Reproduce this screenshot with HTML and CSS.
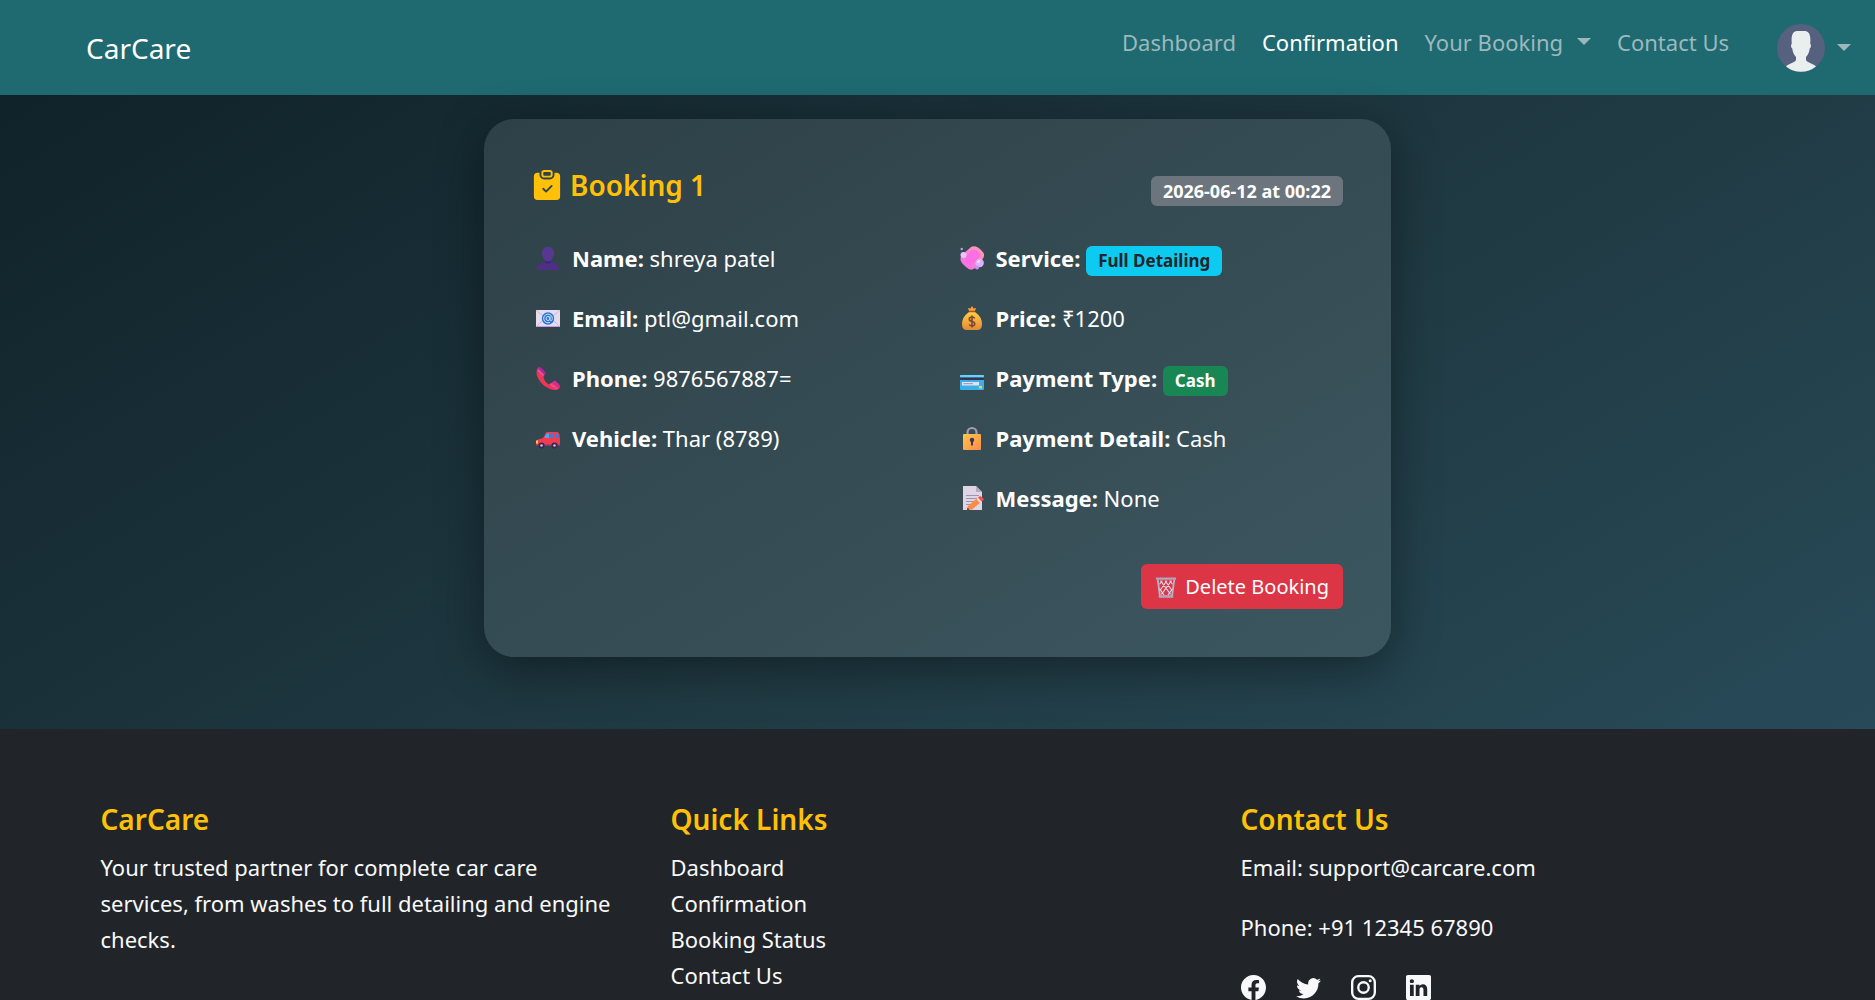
FILE: index.html
```html
<!DOCTYPE html>
<html lang="en">
<head>
	<title>CarCare :: Confirmation</title>
	<meta charset="utf-8">
	<meta name="viewport" content="width=device-width, initial-scale=1.0">
	<link rel="stylesheet" href="styles.css">
</head>

<body>
<nav class="navbar">
	<a href="#" class="brand">CarCare</a>
	<div class="nav_right">
		<ul class="nav_menu">
			<li><a href="#">Dashboard</a></li>
			<li><a href="#" class="active">Confirmation</a></li>
			<li><a href="#" class="dropdown">Your Booking</a></li>
			<li><a href="#">Contact Us</a></li>
		</ul>
		<a href="#" class="profile dropdown" aria-label="Profile">
			<svg class="avatar" viewBox="0 0 48 48">
				<circle cx="24" cy="24" r="24" fill="#56607f"/>
				<path d="M9 42.500C11 40 18 38.500 19 36V33C16.500 30.500 15.500 27 15.300 24.500C13.800 24 13.700 20.500 14.800 19.800C14 12 15.500 7 20 7H28C32.500 7 34 12 33.200 19.800C34.300 20.500 34.200 24 32.700 24.500C32.500 27 31.500 30.500 29 33V36C30 38.500 37 40 39 42.500A24 24 0 0 1 9 42.500Z" fill="#e9eeee"/>
			</svg>
		</a>
	</div>
</nav>

<main class="content">
	<section class="booking">
		<div class="booking_head">
			<h2>
				<svg class="title_icon" viewBox="0 0 16 16" fill="currentColor">
					<path d="M6.500 0A1.500 1.500 0 0 0 5 1.500v1A1.500 1.500 0 0 0 6.500 4h3A1.500 1.500 0 0 0 11 2.500v-1A1.500 1.500 0 0 0 9.500 0zm3 1a.5.5 0 0 1 .5.5v1a.5.5 0 0 1-.5.5h-3a.5.5 0 0 1-.5-.5v-1a.5.5 0 0 1 .5-.5z"/>
					<path d="M4 1.500H3a2 2 0 0 0-2 2V14a2 2 0 0 0 2 2h10a2 2 0 0 0 2-2V3.500a2 2 0 0 0-2-2h-1v1A2.500 2.500 0 0 1 9.500 5h-3A2.500 2.500 0 0 1 4 2.500zm6.854 7.354-3 3a.5.5 0 0 1-.708 0l-1.500-1.500a.5.5 0 0 1 .708-.708L7.500 10.793l2.646-2.647a.5.5 0 0 1 .708.708"/>
				</svg>
				Booking 1
			</h2>
			<span class="badge badge_date">2026-06-12 at 00:22</span>
		</div>
		<div class="booking_info">
			<div class="col">
				<p>
					<svg viewBox="0 0 24 24">
						<path d="M1 24C1 18.500 5 16.500 9 16V14H15V16C19 16.500 23 18.500 23 24Z" fill="#4f2f86"/>
						<path d="M6.500 6C6.500 2.500 8.500 1 12 1S17.500 2.500 17.500 6C19 7 18.500 9.500 17.300 10C16.500 13.500 14.500 15.500 12 15.500S7.500 13.500 6.700 10C5.500 9.500 5 7 6.500 6Z" fill="#573891"/>
						<path d="M9 14.500Q12 17 15 14.500V16.500Q12 18.500 9 16.500Z" fill="#3e2471"/>
					</svg>
					<span><b>Name:</b> shreya patel</span>
				</p>
				<p>
					<svg viewBox="0 0 24 24">
						<rect y="4" width="24" height="17" fill="#e6dcef"/>
						<path d="M0 4L12 14L24 4M0 21L9 12M24 21L15 12" fill="none" stroke="#c5b9d6"/>
						<path d="M0 20H24V21H0Z" fill="#c99be0"/>
						<circle cx="12" cy="12.500" r="6.200" fill="#2f78d2"/>
						<path d="M14 10V13.500C14 15.500 16.300 15 16.300 12.500A4.300 4.300 0 1 0 14 16.300M14 12.500A2 2 0 1 1 10 12.500A2 2 0 1 1 14 12.500" fill="none" stroke="#cfe0fa"/>
					</svg>
					<span><b>Email:</b> ptl@gmail.com</span>
				</p>
				<p>
					<svg viewBox="0 0 24 24">
						<path d="M3 1C0 3 0 8 2 12C5 18 11 23 18 24C21 24 23 23.500 23.500 22L17 16L13 18.500C9.500 16.500 8 14 7.500 11L9 8Z" fill="#ef3658"/>
						<path d="M2.500 1.500Q4 .5 5 1.500L10 6.500L8 9.500L2.500 3.500Z" fill="#a42aa0"/>
						<path d="M16 16.500L18.500 14.500Q20 14.500 23.500 19Q24.500 20.500 23.500 22Z" fill="#d32b9d"/>
						<path d="M2 4L7.500 9.500M14 18L21 22.500" stroke="#f04a94" stroke-width="2"/>
					</svg>
					<span><b>Phone:</b> 9876567887=</span>
				</p>
				<p>
					<svg viewBox="0 0 24 24">
						<path d="M7 12L10 6.500Q10.500 6 11.500 6H21Q23 6 23.300 8L24 13V19Q24 20 23 20H1Q0 20 0 19V15.500Q0 14 2 13.500Z" fill="#f13c52"/>
						<path d="M10.500 7.500H13V12H8.500Z" fill="#47a8f5"/>
						<path d="M14.500 7.500H18V12H14.500ZM19.500 7.500H22L22.700 12H19.500Z" fill="#2e83e0"/>
						<rect y="14.500" width="2" height="3" fill="#ffc839"/>
						<path d="M0 18.500H24V20H0Z" fill="#7e3b73"/>
						<circle cx="5.500" cy="19.500" r="3" fill="#38274f"/>
						<circle cx="18.500" cy="19.500" r="3" fill="#38274f"/>
						<circle cx="5.500" cy="19.500" r="1.300" fill="#c9bdd6"/>
						<circle cx="18.500" cy="19.500" r="1.300" fill="#c9bdd6"/>
					</svg>
					<span><b>Vehicle:</b> Thar (8789)</span>
				</p>
			</div>
			<div class="col">
				<p>
					<svg viewBox="0 0 24 24">
						<defs>
							<linearGradient id="soap" x1="1" y1="0" x2="0" y2="1">
								<stop offset="0" stop-color="#ff9fa9"/>
								<stop offset="1" stop-color="#f46af0"/>
							</linearGradient>
						</defs>
						<path d="M11 1Q14-.5 18 1.500Q23 5 24 8Q24.500 11 22 14L15 22Q11 26 6 21Q1 17 .5 14Q0 11 3 8Z" fill="url(#soap)"/>
						<path d="M12 4Q16 3 20 7.500Q21 10 18 13L12 19Q8 20 5 15Q4 12 7 9Z" fill="#fa70e4"/>
						<circle cx="3.500" cy="9" r="3" fill="#edc1ff"/>
						<circle cx="19.700" cy="17" r="4.200" fill="#dcb2ff"/>
						<circle cx="17" cy="21.500" r="2" fill="#c695f4"/>
						<circle cx="1.700" cy="3" r="1.200" fill="#bba9d0"/>
						<circle cx="18.500" cy="15.500" r="1.500" fill="#f1dcff"/>
					</svg>
					<span><b>Service:</b> <span class="badge badge_info">Full Detailing</span></span>
				</p>
				<p>
					<svg viewBox="0 0 24 24">
						<defs>
							<linearGradient id="bag" x1="0" y1="0" x2="0" y2="1">
								<stop offset="0" stop-color="#ffcd43"/>
								<stop offset="1" stop-color="#e68a34"/>
							</linearGradient>
						</defs>
						<path d="M9 5L8 2L10.500 2.500L12 0L13.500 2.500L16 2L15 5Z" fill="#ff9c35"/>
						<path d="M9 6H15Q22 11 22 18Q22 24 17 24H7Q2 24 2 18Q2 11 9 6Z" fill="url(#bag)"/>
						<path d="M9 5.500H15" stroke="#a9562d" stroke-width="1.500"/>
						<path d="M14.700 12.500Q14 11 12 11Q9.300 11 9.300 13Q9.300 15 12 15.500Q14.700 16 14.700 18Q14.700 20 12 20Q10 20 9.300 18.500M12 9.500V21.500" fill="none" stroke="#7a4636" stroke-width="1.600"/>
					</svg>
					<span><b>Price:</b> ₹1200</span>
				</p>
				<p>
					<svg viewBox="0 0 24 24">
						<rect y="9" width="24" height="15" rx="1" fill="#38b1ea"/>
						<rect y="9" width="24" height="2" rx="1" fill="#65d3f5"/>
						<rect y="11.500" width="24" height="2.500" fill="#3c3150"/>
						<rect x="2" y="16" width="17" height="3.500" fill="#e5e0ef"/>
						<path d="M3.500 17.700H13" stroke="#9b91ad"/>
						<rect x="19" y="20" width="3" height="2.500" fill="#ffcd38"/>
					</svg>
					<span><b>Payment Type:</b> <span class="badge badge_success">Cash</span></span>
				</p>
				<p>
					<svg viewBox="0 0 24 24">
						<defs>
							<linearGradient id="lock" x1="0" y1="0" x2="1" y2="1">
								<stop offset="0" stop-color="#ffc845"/>
								<stop offset="1" stop-color="#fb8a4d"/>
							</linearGradient>
						</defs>
						<path d="M7.500 10V6.500A4.500 4.500 0 0 1 16.500 6.500V10" fill="none" stroke="#a69bb0" stroke-width="2.200"/>
						<rect x="3" y="8" width="18" height="16" rx="1" fill="url(#lock)"/>
						<circle cx="12" cy="14" r="2.200" fill="#41305d"/>
						<path d="M12 14V19.500" stroke="#41305d" stroke-width="2"/>
					</svg>
					<span><b>Payment Detail:</b> Cash</span>
				</p>
				<p>
					<svg viewBox="0 0 24 24">
						<path d="M3 0H16L22 6V24H3Z" fill="#ded5e5"/>
						<path d="M16 0V6H22Z" fill="#b5a9c3"/>
						<path d="M6 9.500H19M6 12.500H19M6 15.500H14M6 18.500H11" stroke="#9e94ab"/>
						<path d="M8 20L18 11.500L21.500 15.500L12 23.500L7 24Z" fill="#ff8c43"/>
						<path d="M16.500 13L18 11.700L21.500 15.500L20 17Z" fill="#eee3f3"/>
						<path d="M18 11.500L20 10Q22 10 24 13.500L21.500 15.500Z" fill="#f4524f"/>
						<path d="M7 24L7.600 21.500L9.500 23.700Z" fill="#633052"/>
					</svg>
					<span><b>Message:</b> None</span>
				</p>
			</div>
		</div>
		<div class="booking_foot">
			<button type="button" class="btn_delete">
				<svg viewBox="0 0 24 24">
					<path d="M3 4L5.500 22.500H18.500L21 4" fill="none" stroke="#bdb2c9" stroke-width="2"/>
					<path d="M6 5L17 20M11 5L18 15M16 5L19 9M18 5L7 20M13 5L6 15M8 5L5 9M5 14L10 21M19 14L14 21" stroke="#ded5e5" stroke-width="1.200"/>
					<path d="M1 1.500H23V4H1ZM4 21H20V23.500H4Z" fill="#b1a6bd"/>
				</svg>
				Delete Booking
			</button>
		</div>
	</section>
</main>

<footer class="footer">
	<div class="footer_inner">
		<div>
			<h3>CarCare</h3>
			<p class="about">Your trusted partner for complete car care services, from washes to full detailing and engine checks.</p>
		</div>
		<div>
			<h3>Quick Links</h3>
			<ul>
				<li><a href="#">Dashboard</a></li>
				<li><a href="#">Confirmation</a></li>
				<li><a href="#">Booking Status</a></li>
				<li><a href="#">Contact Us</a></li>
			</ul>
		</div>
		<div>
			<h3>Contact Us</h3>
			<p>Email: support@carcare.com</p>
			<p>Phone: +91 12345 67890</p>
			<div class="social">
				<a href="#" aria-label="Facebook">
					<svg viewBox="0 0 16 16" fill="currentColor"><path d="M16 8.049c0-4.446-3.582-8.050-8-8.050C3.580 0-.002 3.603-.002 8.050c0 4.017 2.926 7.347 6.750 7.951v-5.625h-2.030V8.050H6.750V6.275c0-2.017 1.195-3.131 3.022-3.131.876 0 1.791.157 1.791.157v1.980h-1.009c-.993 0-1.303.621-1.303 1.258v1.510h2.218l-.354 2.326H9.250V16c3.824-.604 6.750-3.934 6.750-7.951"/></svg>
				</a>
				<a href="#" aria-label="Twitter">
					<svg viewBox="0 0 16 16" fill="currentColor"><path d="M5.026 15c6.038 0 9.341-5.003 9.341-9.334q.002-.211-.006-.422A6.700 6.700 0 0 0 16 3.542a6.700 6.700 0 0 1-1.889.518 3.300 3.300 0 0 0 1.447-1.817 6.500 6.500 0 0 1-2.087.793A3.286 3.286 0 0 0 7.875 6.030a9.320 9.320 0 0 1-6.767-3.429 3.290 3.290 0 0 0 1.018 4.382A3.300 3.300 0 0 1 .64 6.575v.045a3.290 3.290 0 0 0 2.632 3.218 3.200 3.200 0 0 1-.865.115 3 3 0 0 1-.614-.057 3.280 3.280 0 0 0 3.067 2.277A6.600 6.600 0 0 1 .78 13.580a6 6 0 0 1-.78-.045A9.340 9.340 0 0 0 5.026 15"/></svg>
				</a>
				<a href="#" aria-label="Instagram">
					<svg viewBox="0 0 16 16" fill="none" stroke="currentColor" stroke-width="1.500"><rect x=".75" y=".75" width="14.500" height="14.500" rx="4"/><circle cx="8" cy="8" r="3.350"/><circle cx="12.270" cy="3.730" r=".96" fill="currentColor" stroke="none"/></svg>
				</a>
				<a href="#" aria-label="LinkedIn">
					<svg viewBox="0 0 16 16" fill="currentColor"><path d="M0 1.146C0 .513.526 0 1.175 0h13.650C15.474 0 16 .513 16 1.146v13.708c0 .633-.526 1.146-1.175 1.146H1.175C.526 16 0 15.487 0 14.854zm4.943 12.248V6.169H2.542v7.225zm-1.200-8.212c.837 0 1.358-.554 1.358-1.248-.015-.709-.520-1.248-1.342-1.248S2.400 3.226 2.400 3.934c0 .694.521 1.248 1.327 1.248zm4.908 8.212V9.359c0-.216.016-.432.080-.586.173-.431.568-.878 1.232-.878.869 0 1.216.662 1.216 1.634v3.865h2.401V9.250c0-2.220-1.184-3.252-2.764-3.252-1.274 0-1.845.7-2.165 1.193v.025h-.016l.016-.025V6.169h-2.400c.03.678 0 7.225 0 7.225z"/></svg>
				</a>
			</div>
		</div>
	</div>
</footer>
</body>
</html>
```
FILE: styles.css
```css
body, h2, h3, p, ul {
	margin: 0;
	padding: 0;
}
* {
	box-sizing: border-box;
}
ul {
	list-style: none;
}
a {
	color: inherit;
	text-decoration: none;
}
body {
	font-family: "Segoe UI", "Noto Sans", "Open Sans", sans-serif;
	font-size: 22px;
	line-height: 36px;
	color: #fff;
	background: linear-gradient(to bottom right, #0f2027, #203a43, #2c5364);
}

/* navbar */
.navbar {
	display: flex;
	justify-content: space-between;
	align-items: center;
	padding: 0 24px 0 86px;
	height: 95px;
	background-color: #1f6971;
}
.brand {
	font-size: 28px;
}
.nav_right {
	display: flex;
	align-items: center;
	color: #9bb9bd;
}
.nav_menu {
	display: flex;
	gap: 26px;
	margin-right: 48px;
	padding-bottom: 12px;
}
.nav_menu .active {
	color: #fff;
}
.dropdown {
	display: flex;
	align-items: center;
}
.dropdown::after {
	content: "";
	margin-left: 14px;
	border: 7px solid transparent;
	border-top-color: currentColor;
	border-bottom: 0;
}
.profile::after {
	margin-left: 12px;
}
.avatar {
	width: 48px;
	height: 48px;
}

/* booking card */
.content {
	padding: 24px 24px 72px;
}
.booking {
	margin: 0 auto;
	padding: 48px;
	max-width: 907px;
	border-radius: 30px;
	background-color: rgba(255, 255, 255, 0.11);
	box-shadow: 0 12px 48px rgba(0, 0, 0, 0.4);
}
.booking_head {
	display: flex;
	justify-content: space-between;
	align-items: center;
	margin-bottom: 25px;
}
.booking_head h2 {
	display: flex;
	align-items: center;
	gap: 8px;
	margin-bottom: 12px;
	font-size: 28px;
	font-weight: 600;
	color: #ffc107;
}
.title_icon {
	width: 30px;
	height: 30px;
}
.booking_info {
	display: grid;
	grid-template-columns: 1fr 1fr;
	gap: 36px;
}
.booking_info p {
	display: flex;
	align-items: center;
	gap: 12px;
	margin-bottom: 24px;
	padding-left: 4px;
}
.booking_info svg {
	flex: none;
	width: 24px;
	height: 24px;
}
.badge {
	display: inline-block;
	padding: 0 12px;
	border-radius: 6px;
	font-size: 17px;
	font-weight: 700;
	line-height: 30px;
}
.badge_date {
	font-size: 18px;
	background-color: #6c757d;
}
.badge_info {
	color: #212529;
	background-color: #0dcaf0;
}
.badge_success {
	background-color: #198754;
}
.booking_foot {
	display: flex;
	justify-content: flex-end;
	margin-top: 24px;
}
.btn_delete {
	display: flex;
	align-items: center;
	gap: 8px;
	padding: 0 14px;
	height: 45px;
	border: 0;
	border-radius: 6px;
	font-family: inherit;
	font-size: 20px;
	color: #fff;
	background-color: #dc3545;
}
.btn_delete svg {
	width: 22px;
	height: 22px;
}

/* footer */
.footer {
	padding: 72px 24px 120px;
	color: #f8f9fa;
	background-color: #212529;
}
.footer_inner {
	display: grid;
	grid-template-columns: repeat(3, 1fr);
	gap: 36px;
	margin: 0 auto;
	max-width: 1674px;
}
.footer h3 {
	margin-bottom: 12px;
	font-size: 28px;
	font-weight: 600;
	color: #ffc107;
}
.footer p {
	margin-bottom: 24px;
}
.footer .about {
	padding-right: 12px;
}
.social {
	display: flex;
	gap: 30px;
	height: 36px;
	align-items: center;
}
.social svg {
	display: block;
	width: 25px;
	height: 25px;
}
```
